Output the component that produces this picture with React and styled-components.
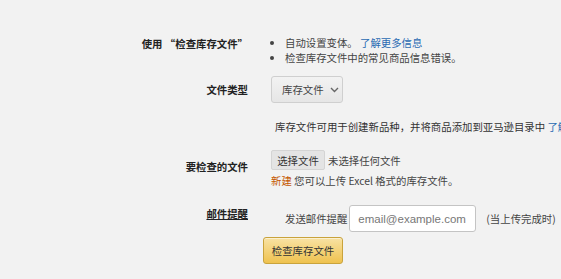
import React from 'react';
import styled, { createGlobalStyle } from 'styled-components';

const GlobalStyle = createGlobalStyle`
	html, body {
		margin: 0;
		padding: 0;
		background: #f2f2f2;
	}
	body {
		font-family: "Noto Sans CJK SC", "Liberation Sans", sans-serif;
		font-size: 10.4px;
		color: #333;
		overflow: hidden;
	}
`

const App = () => (
	<>
		<GlobalStyle />
		<Page>
			<Row $align="start">
				<Label $top={1}>使用 “检查库存文件”</Label>
				<BulletList>
					<li>自动设置变体。 <Link href="#">了解更多信息</Link></li>
					<li>检查库存文件中的常见商品信息错误。</li>
				</BulletList>
			</Row>

			<Row $top={11}>
				<Label>文件类型</Label>
				<Value>
					<Select>
						库存文件
						<Chevron width="9" height="6" viewBox="0 0 9 6">
							<path d="M1 1 L4.5 4.5 L8 1" fill="none" stroke="#666" strokeWidth="1.4" />
						</Chevron>
					</Select>
				</Value>
			</Row>

			<Row $top={16}>
				<span />
				<Description>
					库存文件可用于创建新品种，并将商品添加到亚马逊目录中 <Link href="#">了解更多信息</Link>
				</Description>
			</Row>

			<Row $top={16}>
				<Label $top={9}>要检查的文件</Label>
				<Value>
					<FileLine>
						<FileButton>选择文件</FileButton>
						<span>未选择任何文件</span>
					</FileLine>
					<Hint><New>新建</New> 您可以上传 Excel 格式的库存文件。</Hint>
				</Value>
			</Row>

			<Row $top={17} $align="start">
				<Label $top={1} $underline>邮件提醒</Label>
				<EmailLine>
					<span>发送邮件提醒</span>
					<EmailInput placeholder="email@example.com" />
					<Muted>(当上传完成时)</Muted>
				</EmailLine>
			</Row>

			<Row $top={5}>
				<span />
				<SubmitButton>检查库存文件</SubmitButton>
			</Row>
		</Page>
	</>
)

export default App;

const Page = styled.div`
	padding-top: 35px;
	width: 561px;
	height: 279px;
	box-sizing: border-box;
	overflow: hidden;
`

const Row = styled.div`
	display: grid;
	grid-template-columns: 248px 1fr;
	column-gap: 23px;
	align-items: ${p => p.$align || 'center'};
	margin-top: ${p => p.$top || 0}px;
	white-space: nowrap;
`

const Label = styled.div`
	text-align: right;
	font-weight: bold;
	color: #222;
	line-height: 15px;
	padding-top: ${p => p.$top || 0}px;
	align-self: ${p => (p.$top ? 'start' : 'auto')};
	text-decoration: ${p => (p.$underline ? 'underline' : 'none')};
`

const Value = styled.div`
	display: flex;
	flex-direction: column;
	align-items: flex-start;
`

const BulletList = styled.ul`
	margin: 0;
	padding: 0 0 0 14px;
	line-height: 15px;
	color: #444;

	li {
		list-style: disc;
	}
`

const Link = styled.a`
	color: #2a6bb3;
	text-decoration: none;
`

const Select = styled.div`
	display: flex;
	align-items: center;
	gap: 6px;
	height: 27px;
	box-sizing: border-box;
	padding: 0 5px 0 10px;
	background: linear-gradient(#f2f2f2, #e6e6e6);
	border: 1px solid #cfcfcf;
	border-radius: 3px;
	color: #444;
	width: 72px;
`

const Chevron = styled.svg`
	flex-shrink: 0;
`

const Description = styled.div`
	padding-left: 4px;
	line-height: 15px;
	color: #333;
`

const FileLine = styled.div`
	display: flex;
	align-items: center;
	gap: 3px;
	color: #444;
`

const FileButton = styled.div`
	height: 20px;
	line-height: 20px;
	width: 54px;
	text-align: center;
	background: #e4e4e4;
	border: 1px solid #d4d4d4;
	border-radius: 2px;
	color: #333;
	box-sizing: border-box;
`

const Hint = styled.div`
	margin-top: 3px;
	line-height: 15px;
	color: #444;
`

const New = styled.span`
	color: #c45500;
`

const EmailLine = styled.div`
	display: flex;
	align-items: center;
	gap: 2px;
	padding-left: 14px;
	color: #444;
`

const EmailInput = styled.input`
	width: 127px;
	height: 27px;
	box-sizing: border-box;
	padding: 0 8px;
	border: 1px solid #c4c4c4;
	border-radius: 3px;
	background: #fff;
	font-family: "Liberation Sans", "Noto Sans CJK SC", sans-serif;
	font-size: 11.5px;
	color: #333;

	&::placeholder {
		color: #777;
	}
`

const Muted = styled.span`
	margin-left: 8px;
	color: #444;
`

const SubmitButton = styled.div`
	justify-self: start;
	margin-left: -8px;
	width: 80px;
	height: 27px;
	box-sizing: border-box;
	display: flex;
	align-items: center;
	justify-content: center;
	background: linear-gradient(#f8e2a4, #efc24f);
	border: 1px solid #c9a33c;
	border-radius: 3px;
	color: #333;
	box-shadow: 0 1px 0 rgba(255, 255, 255, 0.5) inset;
`
